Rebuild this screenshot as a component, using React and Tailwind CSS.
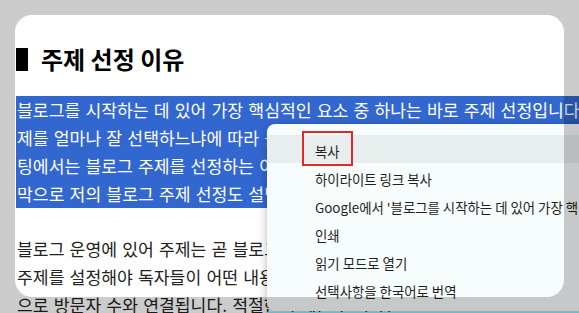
const FONT = "font-['Noto_Sans_CJK_KR',sans-serif]";

const selectedLines = [
  "블로그를 시작하는 데 있어 가장 핵심적인 요소 중 하나는 바로 주제 선정입니다. 주",
  "제를 얼마나 잘 선택하느냐에 따라 블로그의 성공 여부가 결정되기도 합니다. 이번 포스",
  "팅에서는 블로그 주제를 선정하는 이유와 중요성에 대해 알아보고, 마지",
  "막으로 저의 블로그 주제 선정도 설명해 보겠습니다.",
];

const bodyLines = [
  "블로그 운영에 있어 주제는 곧 블로그의 정체성을 결정짓는 가장 중요한 요소입니다. 명확한",
  "주제를 설정해야 독자들이 어떤 내용을 기대할 수 있는지 알 수 있고, 이는 자연스럽게 직접적",
  "으로 방문자 수와 연결됩니다. 적절한 주제를 선택하면",
];

const menuItems = [
  "복사",
  "하이라이트 링크 복사",
  "Google에서 '블로그를 시작하는 데 있어 가장 핵심적인 요소 중...' 검색",
  "인쇄",
  "읽기 모드로 열기",
  "선택사항을 한국어로 번역",
];

const ContextMenu = () => (
  <div className="absolute left-[267px] top-[124px] flex w-[340px] flex-col rounded-lg bg-[#f7fcfc] pt-[11px] pb-2 shadow-[0_2px_10px_rgba(0,0,0,0.28)]">
    {menuItems.map((label, i) => (
      <div
        key={label}
        className={`flex h-[28px] items-center whitespace-nowrap pl-[48px] pt-[4px] text-[13.4px] text-[#1f1f1f] ${i === 0 ? 'bg-[#e8eded]' : ''}`}
      >
        {label}
      </div>
    ))}
  </div>
);

export default function App() {
  return (
    <div className={`relative h-[313px] w-[579px] overflow-hidden bg-white ${FONT}`}>
      <div className="flex flex-col pl-[16px] pt-[41px]">
        <h2 className="flex h-[34px] items-center pt-[2px] text-[24px] font-bold text-black">
          <span className="mr-[13px] h-[23px] w-[12px] bg-black" />
          주제 선정 이유
        </h2>

        <div className="mt-[21px] bg-[#3367d0] pl-[1px] text-[17.2px] text-white [word-spacing:1.3px]">
          {selectedLines.map((line) => (
            <div key={line} className="h-[28px] whitespace-nowrap leading-[28px]">{line}</div>
          ))}
        </div>

        <div className="mt-[27px] pl-[1px] text-[17.2px] text-[#222] [word-spacing:1.3px]">
          {bodyLines.map((line) => (
            <div key={line} className="h-[28px] whitespace-nowrap leading-[28px]">{line}</div>
          ))}
        </div>
      </div>

      <ContextMenu />

      {/* capture frame: dim everything outside the rounded cut-out */}
      <div className="pointer-events-none absolute left-[15px] top-[15px] h-[282px] w-[549px] rounded-[17px] shadow-[0_0_0_1000px_rgba(0,0,0,0.2)]" />

      {/* annotation box around the first item */}
      <div className="pointer-events-none absolute left-[302px] top-[131px] h-[35px] w-[51px] border-2 border-[#e5262b]" />

      <div className="absolute left-[267px] right-0 top-[312px] h-px bg-[#62bfd6]" />
    </div>
  );
}
